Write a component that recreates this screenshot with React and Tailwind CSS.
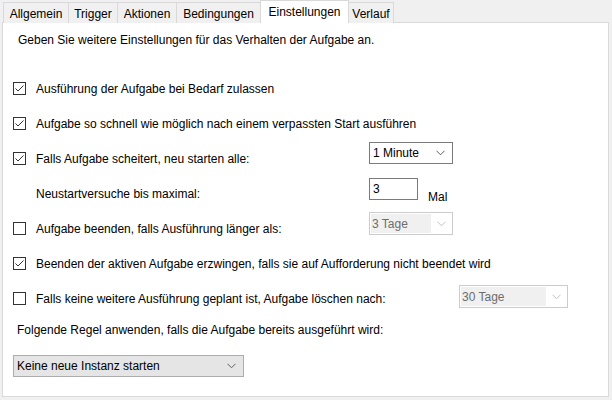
import React from 'react'

const font = { fontFamily: '"Liberation Sans", Arial, sans-serif' }

const tabs = [
  { label: 'Allgemein', w: 'w-[66px]' },
  { label: 'Trigger', w: 'w-[50px]' },
  { label: 'Aktionen', w: 'w-[60px]' },
  { label: 'Bedingungen', w: 'w-[85px]' },
  { label: 'Einstellungen', w: 'w-[89px]', active: true },
  { label: 'Verlauf', w: 'w-[46px]' },
]

const Chevron = ({ color = '#606060' }) => (
  <svg width="9" height="6" viewBox="0 0 9 6" className="shrink-0">
    <path d="M0.5 0.8 L4.5 4.8 L8.5 0.8" fill="none" stroke={color} strokeWidth="1" />
  </svg>
)

const CheckBox = ({ checked }) => (
  <div className="w-[13px] h-[13px] border border-[#333333] bg-white flex items-center justify-center shrink-0">
    {checked && (
      <svg width="11" height="11" viewBox="0 0 11 11">
        <path d="M1.5 5.5 L4 8 L9.5 2.5" fill="none" stroke="#333333" strokeWidth="1" />
      </svg>
    )}
  </div>
)

const Select = ({ value, w, disabled, gray }) => {
  if (disabled) {
    return (
      <div className={`${w} h-[23px] border border-[#cccccc] bg-white flex items-center p-[1px]`}>
        <div className="flex-1 h-full bg-[#f0f0f0] text-[#6d6d6d] flex items-center pl-[1px]">{value}</div>
        <div className="w-[20px] flex justify-center">
          <Chevron color="#c0c0c0" />
        </div>
      </div>
    )
  }
  return (
    <div
      className={`${w} h-[22px] border flex items-center justify-between pl-[3px] pr-[7px] ${
        gray ? 'bg-[#e5e5e5] border-[#adadad]' : 'bg-white border-[#7a7a7a]'
      }`}
    >
      <span>{value}</span>
      <Chevron />
    </div>
  )
}

const Row = ({ checked, label, labelW = 'w-[333px]', children, noBox }) => (
  <div className="h-[35px] flex items-center">
    <div className="w-[23px] flex">{!noBox && <CheckBox checked={checked} />}</div>
    <div className={`${labelW} shrink-0`}>{label}</div>
    {children}
  </div>
)

export default function App() {
  return (
    <div className="w-[612px] h-[400px] bg-[#f0f0f0] text-[12px] text-black leading-4 overflow-hidden" style={font}>
      {/* tab strip */}
      <div className="flex items-end h-[23px] pl-[3px] relative z-10">
        {tabs.map((t) =>
          t.active ? (
            <div
              key={t.label}
              className={`${t.w} h-[23px] bg-white border border-b-0 border-[#d9d9d9] -ml-px flex items-center justify-center pb-[1px]`}
            >
              {t.label}
            </div>
          ) : (
            <div
              key={t.label}
              className={`${t.w} h-[21px] bg-[#f0f0f0] border border-b-0 border-[#d9d9d9] -ml-px first:ml-0 flex items-center justify-center pt-[1px]`}
            >
              {t.label}
            </div>
          )
        )}
      </div>

      {/* settings panel */}
      <div className="ml-[2px] w-[607px] h-[375px] -mt-px bg-white border border-[#d9d9d9] pl-[10px]">
        <div className="pt-[9px] pl-[5px] h-[48px]">Geben Sie weitere Einstellungen für das Verhalten der Aufgabe an.</div>

        <Row checked label="Ausführung der Aufgabe bei Bedarf zulassen" />
        <Row checked label="Aufgabe so schnell wie möglich nach einem verpassten Start ausführen" labelW="w-auto" />
        <Row checked label="Falls Aufgabe scheitert, neu starten alle:">
          <div className="self-start mt-[1px]">
            <Select value="1 Minute" w="w-[84px]" />
          </div>
        </Row>
        <Row noBox label="Neustartversuche bis maximal:">
          <div className="self-start mt-[2px] flex items-end">
            <div className="w-[49px] h-[22px] border border-[#7a7a7a] bg-white pl-[3px] flex items-center">3</div>
            <span className="ml-[10px] translate-y-[5px]">Mal</span>
          </div>
        </Row>
        <Row label="Aufgabe beenden, falls Ausführung länger als:">
          <div className="self-start mt-[1px]">
            <Select value="3 Tage" w="w-[84px]" disabled />
          </div>
        </Row>
        <Row checked label="Beenden der aktiven Aufgabe erzwingen, falls sie auf Aufforderung nicht beendet wird" labelW="w-auto" />
        <Row label="Falls keine weitere Ausführung geplant ist, Aufgabe löschen nach:" labelW="w-[423px]">
          <div className="self-start mt-[4px]">
            <Select value="30 Tage" w="w-[109px]" disabled />
          </div>
        </Row>

        <div className="h-[28px] flex items-center pl-[4px]">Folgende Regel anwenden, falls die Aufgabe bereits ausgeführt wird:</div>

        <div className="mt-[11px]">
          <Select value="Keine neue Instanz starten" w="w-[231px]" gray />
        </div>
      </div>
    </div>
  )
}
